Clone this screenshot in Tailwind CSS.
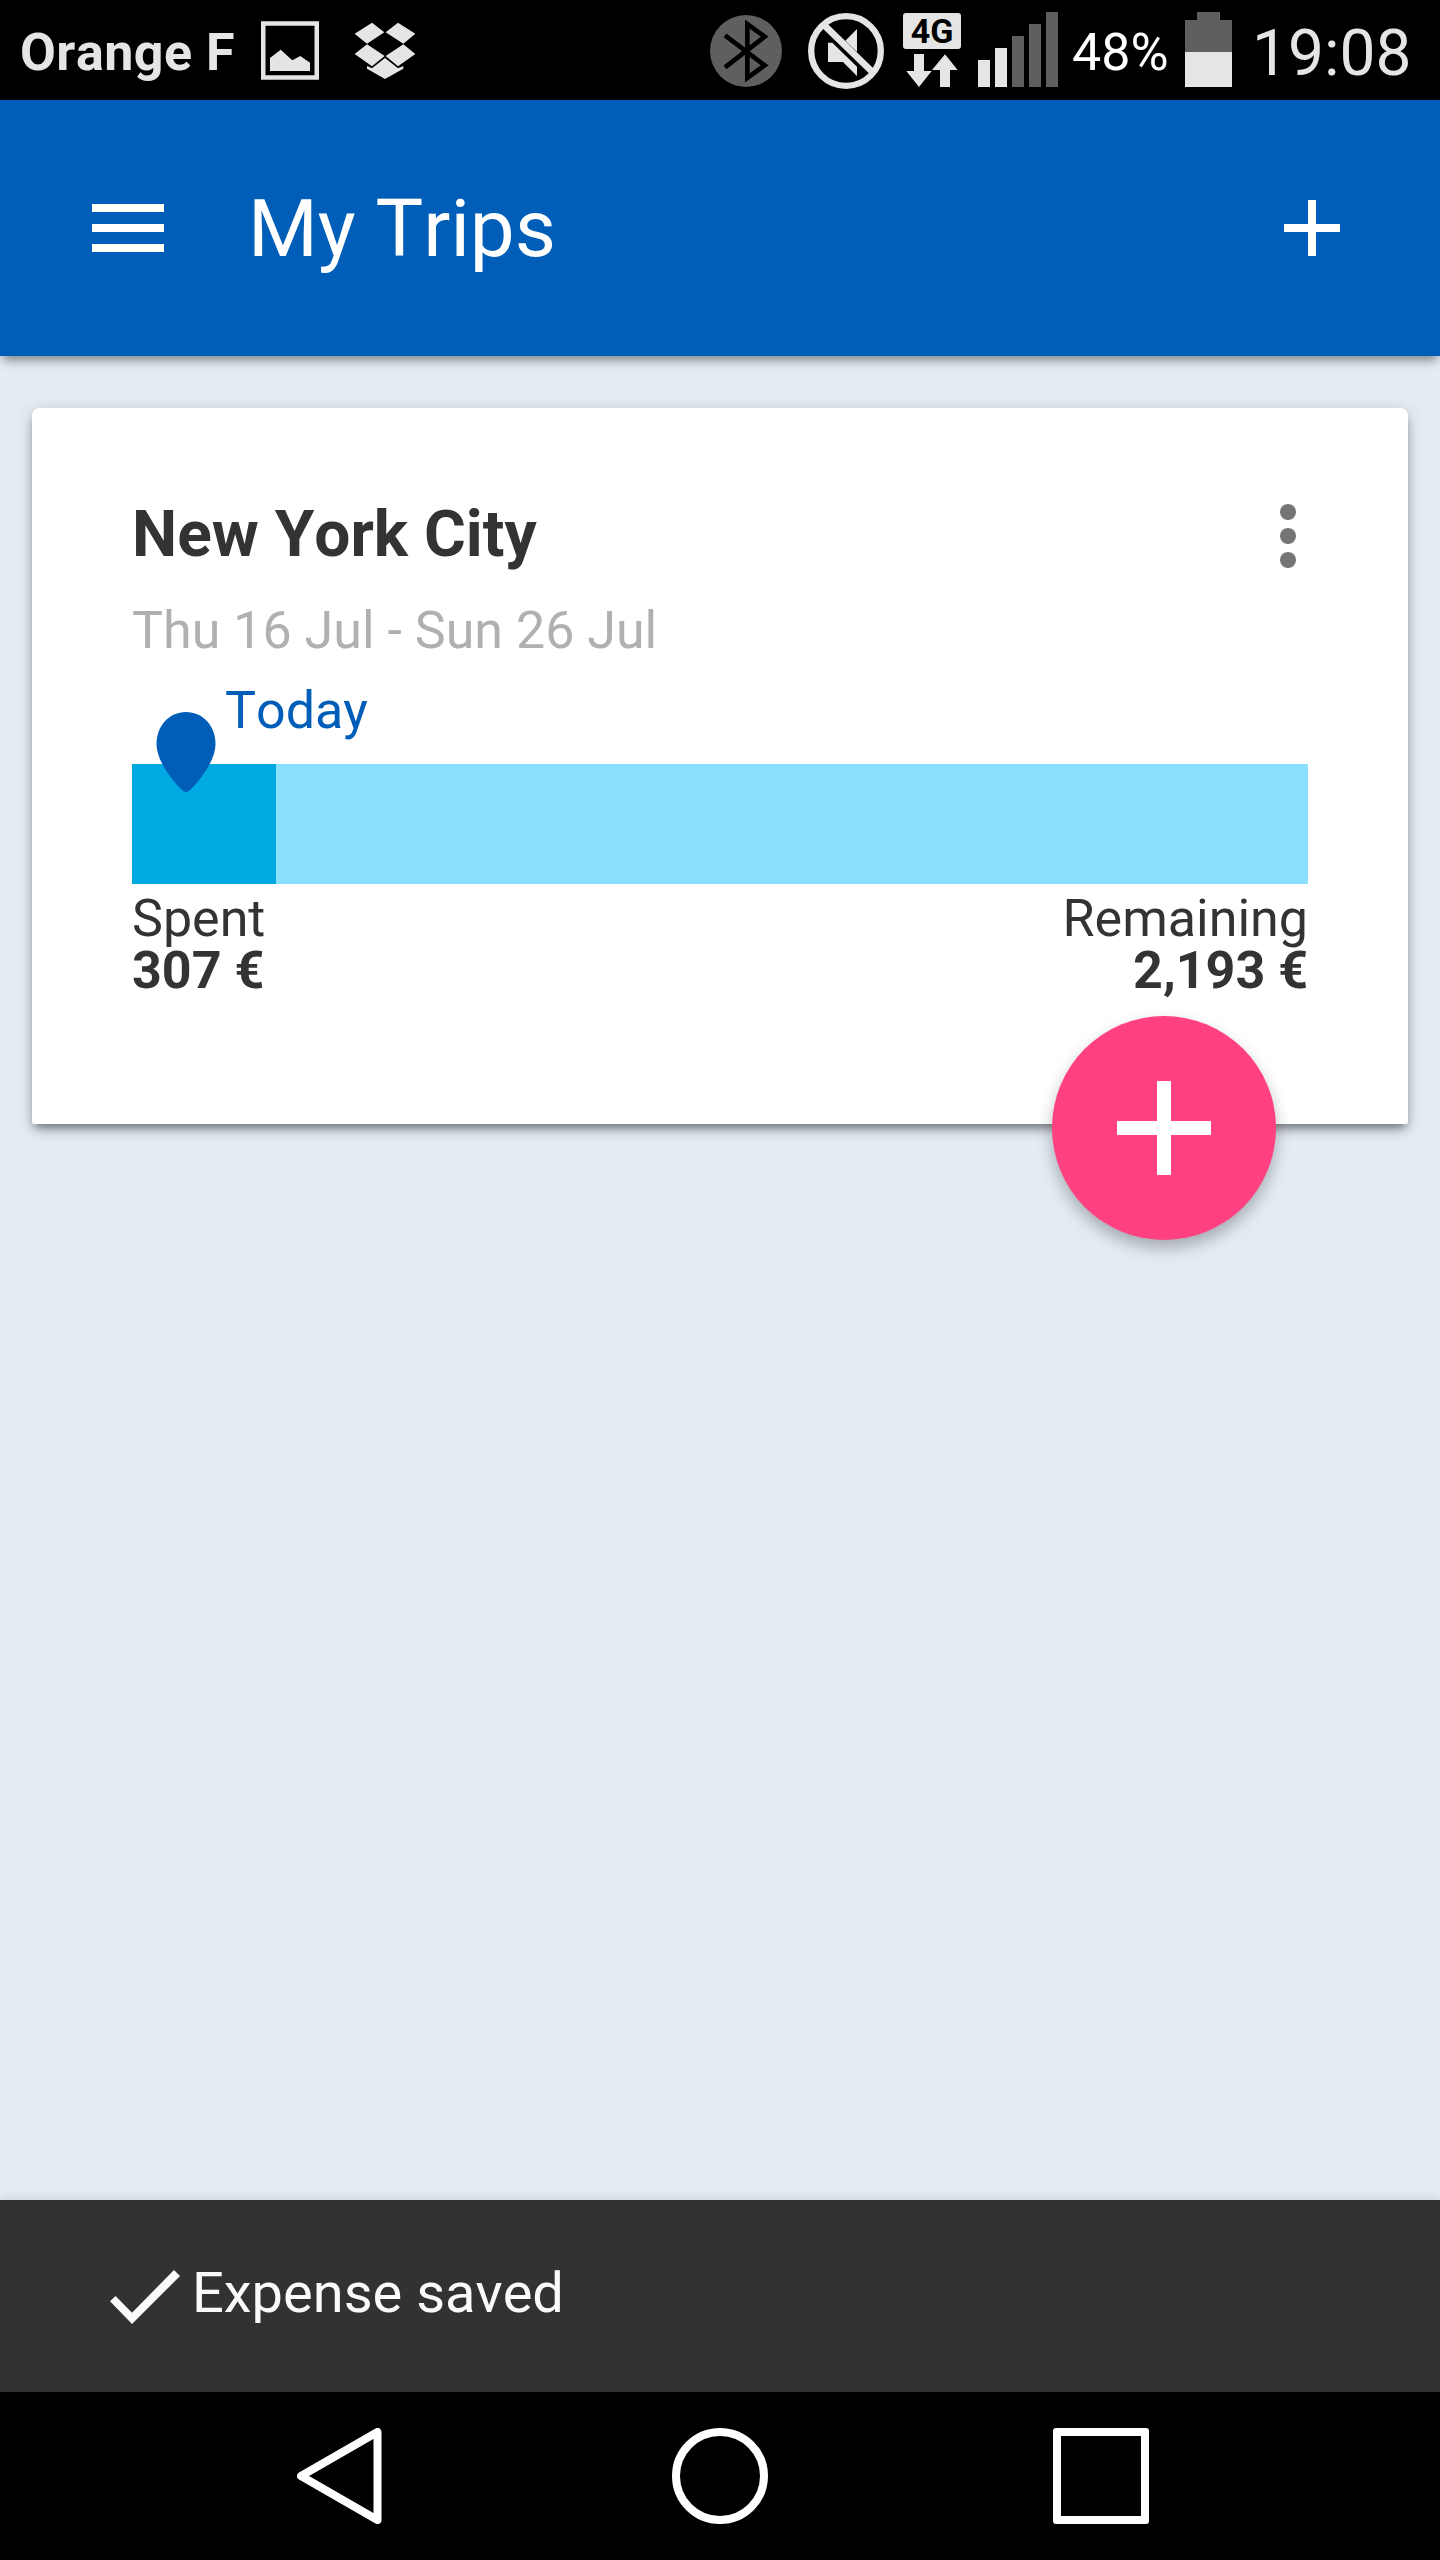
<!DOCTYPE html>
<html lang="en">
<head>
  <meta charset="UTF-8" />
  <meta name="viewport" content="width=device-width, initial-scale=1.0" />
  <title>My Trips</title>
  <script src="https://cdn.jsdelivr.net/npm/@tailwindcss/browser@4"></script>
</head>
<body class="flex flex-col w-[1440px] h-[2560px] overflow-hidden bg-[#e4ebf3] text-[#333333] font-['Roboto',sans-serif] [font-kerning:none]">

  <!-- Status bar -->
  <div class="flex items-start justify-between h-[100px] shrink-0 bg-black text-[#e5e5e5] pl-[20px] pr-[28px] whitespace-nowrap">
    <div class="flex items-start">
      <span class="w-[241px] text-[52px] leading-[105px] font-bold tracking-[0.5px]">Orange F</span>
      <svg class="mt-[21px] w-[58px] h-[59px]" viewBox="0 0 58 59">
        <rect x="2.25" y="2.5" width="53.5" height="54" fill="none" stroke="#e5e5e5" stroke-width="4.5" />
        <path d="M9 37l10.7-8.3 11.6 10.6 8-4.3 9.7 6.7V50H9z" fill="#e5e5e5" />
      </svg>
      <svg class="mt-[22px] ml-[35px] w-[62px] h-[58px]" viewBox="1065 66 186 174" fill="#e5e5e5">
        <path d="M1067 101l52-33 37 29-52 34zM1160 97l37-29 52 33-36 30zM1067 162l37-29 53 35-38 31zM1160 168l53-35 36 29-52 37z" />
        <path d="M1104 198l15 7 39-31 39 31 16-7v8l-55 31-54-31z" />
      </svg>
    </div>

    <div class="flex items-start">
      <svg class="mt-[15px] w-[72px] h-[72px]" viewBox="60 45 216 216">
        <circle cx="168" cy="153" r="108" fill="#5f5f5f" />
        <path d="M105 106L224 196l-52 38V72l52 38-119 92" fill="none" stroke="#000" stroke-width="14" />
      </svg>
      <svg class="mt-[13px] ml-[26px] w-[76px] h-[76px]" viewBox="354 39 228 228">
        <circle cx="468" cy="153" r="104.5" fill="none" stroke="#e5e5e5" stroke-width="19" />
        <path d="M405 78L546 215" stroke="#e5e5e5" stroke-width="20" />
        <path d="M466 122l35-35v69zM414 128h13l74 72v28l-42-42h-45z" fill="#e5e5e5" />
      </svg>
      <div class="flex flex-col items-center w-[58px] mt-[13px] ml-[19px]">
        <div class="w-[58px] h-[36px] rounded-[3px] bg-[#e5e5e5] text-black text-center text-[34px] leading-[36px] font-bold">4G</div>
        <svg class="mt-[5px] w-[52px] h-[33px]" viewBox="648 162 156 99" fill="#e5e5e5">
          <path d="M672 162h30v51h23l-38 48-38-48h23zM765 163l38 47h-23v51h-30v-51h-24z" />
        </svg>
      </div>
      <div class="flex items-end gap-[5px] h-[75px] mt-[12px] ml-[17px]">
        <div class="w-3 h-[27px] bg-[#e5e5e5]"></div>
        <div class="w-3 h-[39px] bg-[#e5e5e5]"></div>
        <div class="w-3 h-[51px] bg-[#5f5f5f]"></div>
        <div class="w-3 h-[63px] bg-[#5f5f5f]"></div>
        <div class="w-3 h-[75px] bg-[#5f5f5f]"></div>
      </div>
      <span class="w-[113px] ml-[14px] text-[52px] leading-[105px] text-white">48%</span>
      <svg class="mt-[12px] w-[47px] h-[75px]" viewBox="0 0 47 75">
        <path d="M12 0h23v8h12v32H0V8h12z" fill="#5f5f5f" />
        <path d="M0 40h47v35H0z" fill="#e5e5e5" />
      </svg>
      <span class="w-[160px] ml-[20px] text-[64px] leading-[108px]">19:08</span>
    </div>
  </div>

  <!-- App bar -->
  <header class="flex h-[256px] shrink-0 bg-[#005eb8] text-white pl-[92px] pr-[100px] shadow-[0_7px_10px_-3px_rgba(0,0,0,0.45)]">
    <div class="flex flex-col gap-3 mt-[104px] w-[72px]">
      <div class="h-2 bg-white"></div>
      <div class="h-2 bg-white"></div>
      <div class="h-2 bg-white"></div>
    </div>
    <h1 class="ml-[84px] flex-1 text-[80px] leading-[259px]">My Trips</h1>
    <svg class="mt-[100px] w-[56px] h-[56px]" viewBox="0 0 56 56">
      <path d="M24 0h8v24h24v8H32v24h-8V32H0v-8h24z" fill="#fff" />
    </svg>
  </header>

  <!-- Trip list -->
  <main class="flex-1 px-8 pt-[52px]">
    <section class="relative h-[716px] px-[100px] pt-[85px] bg-white rounded-t-[8px] rounded-b-[2px] shadow-[0_4px_16px_rgba(0,0,0,0.2),0_7px_10px_-3px_rgba(0,0,0,0.4)]">
      <div class="flex justify-between">
        <h2 class="text-[64px] leading-[84px] font-bold">New York City</h2>
        <svg class="mt-[11px] mr-[12px] w-4 h-16" viewBox="0 0 16 64" fill="#757575">
          <circle cx="8" cy="8" r="8" />
          <circle cx="8" cy="32" r="8" />
          <circle cx="8" cy="56" r="8" />
        </svg>
      </div>
      <p class="mt-[24px] text-[52px] leading-[60px] text-[#b0b0b0]">Thu 16 Jul - Sun 26 Jul</p>
      <p class="mt-[20px] mb-[23px] ml-[93px] text-[52px] leading-[60px] text-[#005eb8]">Today</p>

      <div class="h-[120px] bg-[#8ae1ff]">
        <div class="h-full bg-[#00a9e2]" style="width: 12.28%"></div>
      </div>
      <svg class="absolute left-[123.500px] top-[304px] w-[60px] h-[80px]" viewBox="0 0 60 80">
        <path d="M30 0C47 0 59.500 14 59.500 32C59.500 47 47 65 34 78Q30 82 26 78C13 65 .5 47 .5 32C.5 14 13 0 30 0z" fill="#005eb8" />
      </svg>

      <div class="flex justify-between mt-[9px] text-[52px] leading-[52px]">
        <div>
          <p>Spent</p>
          <p class="font-bold">307 €</p>
        </div>
        <div class="text-right">
          <p>Remaining</p>
          <p class="font-bold">2,193 €</p>
        </div>
      </div>

      <button class="absolute left-[1020px] top-[608px] flex items-center justify-center w-[224px] h-[224px] rounded-full bg-[#ff4081] shadow-[0_8px_16px_rgba(0,0,0,0.28)]">
        <svg class="w-[94px] h-[94px]" viewBox="0 0 94 94">
          <path d="M40 0h14v40h40v14H54v40H40V54H0V40h40z" fill="#fff" />
        </svg>
      </button>
    </section>
  </main>

  <!-- Snackbar -->
  <div class="flex h-[192px] shrink-0 bg-[#323232] text-[#fafafa] pl-[110px] shadow-[0_0_12px_rgba(0,0,0,0.12)]">
    <svg class="mt-[70px] w-[70px] h-[54px]" viewBox="0 0 70 54">
      <path d="M0 31.300L5.600 26 22 42.700 64 0l6 6-48 48z" fill="#fafafa" />
    </svg>
    <span class="ml-[12px] text-[56px] leading-[187px]">Expense saved</span>
  </div>

  <!-- Navigation keys -->
  <nav class="flex items-start h-[168px] shrink-0 bg-black pl-[297px] pt-[36px]">
    <svg class="w-[85px] h-[96px]" viewBox="0 0 85 96">
      <path d="M4 48L80.500 4v88z" fill="none" stroke="#fff" stroke-width="8" stroke-linejoin="round" />
    </svg>
    <div class="ml-[290px] w-[96px] h-[96px] rounded-full border-8 border-white"></div>
    <div class="ml-[285px] w-[96px] h-[96px] rounded-[3px] border-8 border-white"></div>
  </nav>

</body>
</html>
